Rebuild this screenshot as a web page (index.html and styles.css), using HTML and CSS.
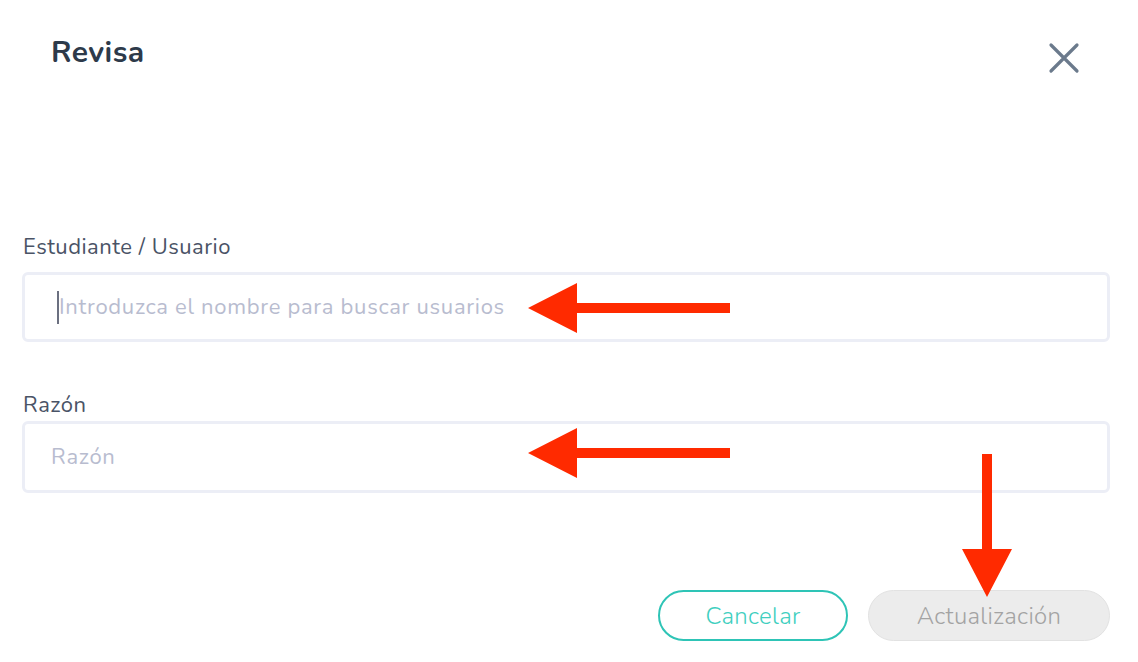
FILE: index.html
```html
<!DOCTYPE html>
<html lang="es">
<head>
<meta charset="UTF-8">
<title>Revisa</title>
<link rel="stylesheet" href="styles.css">
</head>
<body>
<div class="dialog">
  <div class="dialog-header">
    <h1 class="dialog-title">Revisa</h1>
    <button class="close-btn" aria-label="Cerrar">
      <svg width="32" height="32" viewBox="0 0 32 32"><path d="M3 3 L29 29 M29 3 L3 29" stroke="#6b7a8c" stroke-width="3.2" stroke-linecap="round" fill="none"/></svg>
    </button>
  </div>

  <div class="dialog-body">
    <div class="field">
      <label class="field-label">Estudiante / Usuario</label>
      <div class="field-input first">
        <span class="caret"></span><span class="placeholder">Introduzca el nombre para buscar usuarios</span>
      </div>
    </div>
    <div class="field">
      <label class="field-label tight">Razón</label>
      <div class="field-input second">
        <span class="placeholder">Razón</span>
      </div>
    </div>
  </div>

  <div class="dialog-footer">
    <button class="btn btn-cancel">Cancelar</button>
    <button class="btn btn-update">Actualización</button>
  </div>

  <!-- annotation arrows -->
  <svg class="arrow arrow-1" width="210" height="54" viewBox="0 0 210 54"><polygon points="0,27 49,2 49,22 202,22 202,32 49,32 49,52" fill="#ff2a00"/></svg>
  <svg class="arrow arrow-2" width="210" height="54" viewBox="0 0 210 54"><polygon points="0,27 49,2 49,22 202,22 202,32 49,32 49,52" fill="#ff2a00"/></svg>
  <svg class="arrow arrow-3" width="54" height="145" viewBox="0 0 54 145"><polygon points="27,143 2,95 22,95 22,0 32,0 32,95 52,95" fill="#ff2a00"/></svg>
</div>
</body>
</html>
```

FILE: styles.css
```css
* {
  box-sizing: border-box;
}
body {
  margin: 0;
  background: #fff;
  font-family: 'Nunito', 'Lato', 'Noto Sans', sans-serif;
}
.dialog {
  position: relative;
  width: 1138px;
  height: 662px;
  padding: 0 28px 0 22px;
}
.dialog-header {
  display: flex;
  justify-content: space-between;
  align-items: flex-start;
  padding: 31px 30px 0 29px;
}
.dialog-title {
  margin: 0;
  font-size: 30px;
  line-height: 44px;
  font-weight: 700;
  letter-spacing: 0.5px;
  color: #2d3a4a;
}
.close-btn {
  background: none;
  border: none;
  padding: 0;
  margin-top: 11px;
  width: 32px;
  height: 32px;
  display: flex;
}
.dialog-body {
  margin-top: 157px;
  display: flex;
  flex-direction: column;
  gap: 48px;
}
.field-label {
  display: block;
  font-size: 22px;
  line-height: 30px;
  letter-spacing: 0.5px;
  color: #4a5366;
  margin-bottom: 10px;
  padding-left: 1px;
}
.field-label.tight {
  margin-bottom: 1px;
}
.field-input {
  border: 3px solid #eceef6;
  border-radius: 6px;
  height: 70px;
  display: flex;
  align-items: center;
  padding-left: 26px;
}
.field-input.second {
  height: 72px;
}
.caret {
  width: 2px;
  height: 33px;
  background: #6b7080;
  margin-left: 6px;
}
.placeholder {
  font-size: 22px;
  letter-spacing: 0.7px;
  color: #b8bccf;
}
.dialog-footer {
  display: flex;
  justify-content: flex-end;
  gap: 20px;
  margin-top: 97px;
}
.btn {
  font-family: inherit;
  font-size: 24px;
  font-weight: 300;
  letter-spacing: 0.3px;
  height: 51px;
  border-radius: 26px;
  cursor: pointer;
}
.btn-cancel {
  width: 190px;
  background: #fff;
  border: 2px solid #2ec4b6;
  color: #3fcfc0;
}
.btn-update {
  width: 242px;
  background: #ececec;
  border: 1px solid #e2e2e2;
  color: #a3a3a3;
}
.arrow {
  position: absolute;
}
.arrow-1 {
  left: 528px;
  top: 281px;
}
.arrow-2 {
  left: 528px;
  top: 426px;
}
.arrow-3 {
  left: 960px;
  top: 454px;
}
```
